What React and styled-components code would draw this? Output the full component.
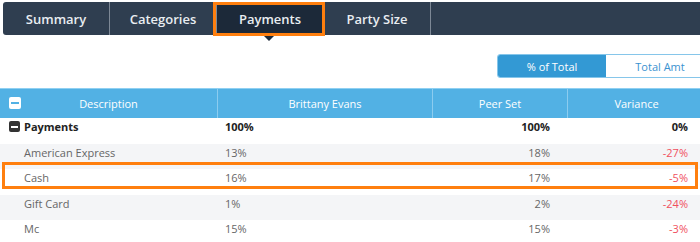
import React from "react";
import styled, { createGlobalStyle } from "styled-components";

const Global = createGlobalStyle`
  html, body { margin: 0; padding: 0; overflow: hidden; background: #fff; }
  body { font-family: "Open Sans", "Liberation Sans", sans-serif; }
`;

const Page = styled.div`
  position: relative;
  width: 715px;
  padding-top: 2px;
`;

const TabBar = styled.div`
  display: flex;
  height: 33px;
  margin-left: 3px;
  background: #2f3e50;
  border-radius: 3px;
`;

const Tab = styled.div`
  position: relative;
  width: 106px;
  display: flex;
  align-items: center;
  justify-content: center;
  font-size: 13px;
  font-weight: 600;
  color: #e9edf1;
  border-right: 1px solid #7d8896;
  background: ${(p) => (p.$active ? "#1c2939" : "transparent")};
  border-radius: ${(p) => (p.$first ? "3px 0 0 3px" : "0")};
  &::after {
    content: "";
    display: ${(p) => (p.$active ? "block" : "none")};
    position: absolute;
    left: 50%;
    top: 100%;
    margin-left: -7px;
    border-left: 6px solid transparent;
    border-right: 6px solid transparent;
    border-top: 6px solid #1c2939;
  }
`;

const Highlight = styled.div`
  position: absolute;
  border: 3px solid #ff7f0e;
  pointer-events: none;
  box-sizing: border-box;
`;

const Toolbar = styled.div`
  display: flex;
  justify-content: flex-end;
  margin-top: 19px;
`;

const Toggle = styled.div`
  display: flex;
  height: 24px;
  border: 1px solid #86c6ea;
  border-radius: 3px;
  overflow: hidden;
  box-sizing: border-box;
`;

const ToggleBtn = styled.div`
  width: 108px;
  display: flex;
  align-items: center;
  justify-content: center;
  font-size: 11px;
  color: ${(p) => (p.$active ? "#fff" : "#3b92d0")};
  background: ${(p) => (p.$active ? "#3399d4" : "#fff")};
`;

const Table = styled.div`
  margin-top: 10px;
  width: 705px;
  font-size: 11px;
`;

const cols = "217px 215px 135px 138px";

const HeadRow = styled.div`
  display: grid;
  grid-template-columns: ${cols};
  height: 30px;
  background: #52b1e4;
  border-top: 1px solid #8fd0f2;
  box-sizing: border-box;
`;

const HeadCell = styled.div`
  position: relative;
  display: flex;
  align-items: center;
  justify-content: center;
  color: #fff;
  border-left: ${(p) => (p.$first ? "none" : "1px solid #8cccef")};
`;

const HeadIcon = styled.span`
  position: absolute;
  left: 9px;
  top: 8px;
  width: 12px;
  height: 12px;
  border-radius: 2px;
  background: #fff;
  display: flex;
  align-items: center;
  justify-content: center;
  &::before {
    content: "";
    width: 8px;
    height: 2px;
    background: #52b1e4;
  }
`;

const Row = styled.div`
  display: grid;
  grid-template-columns: ${cols};
  height: 25.5px;
  background: ${(p) => (p.$alt ? "#f4f5f7" : "#fff")};
  color: ${(p) => (p.$bold ? "#222" : "#666")};
  font-weight: ${(p) => (p.$bold ? 700 : 400)};
  line-height: 15px;
`;

const Cell = styled.div`
  padding: 1px ${(p) => (p.$right ? "17px" : "0")} 0 ${(p) => p.$indent || "0"};
  text-align: ${(p) => (p.$right ? "right" : "left")};
  color: ${(p) => (p.$neg ? "#f0505e" : "inherit")};
  display: flex;
  align-items: flex-start;
  justify-content: ${(p) => (p.$right ? "flex-end" : "flex-start")};
`;

const GroupIcon = styled.span`
  width: 11px;
  height: 11px;
  border-radius: 2px;
  background: #333;
  margin: 2px 4px 0 0;
  display: flex;
  align-items: center;
  justify-content: center;
  &::before {
    content: "";
    width: 7px;
    height: 2px;
    background: #fff;
  }
`;

const rows = [
  { name: "American Express", a: "13%", b: "18%", v: "-27%" },
  { name: "Cash", a: "16%", b: "17%", v: "-5%" },
  { name: "Gift Card", a: "1%", b: "2%", v: "-24%" },
  { name: "Mc", a: "15%", b: "15%", v: "-3%" },
];

export default function App() {
  return (
    <Page>
      <Global />
      <TabBar>
        <Tab $first>Summary</Tab>
        <Tab>Categories</Tab>
        <Tab $active>Payments</Tab>
        <Tab>Party Size</Tab>
      </TabBar>
      <Highlight style={{ left: 213, top: 2, width: 112, height: 34 }} />
      <Toolbar>
        <Toggle>
          <ToggleBtn $active>% of Total</ToggleBtn>
          <ToggleBtn>Total Amt</ToggleBtn>
        </Toggle>
      </Toolbar>
      <Table>
        <HeadRow>
          <HeadCell $first>
            <HeadIcon />
            Description
          </HeadCell>
          <HeadCell>Brittany Evans</HeadCell>
          <HeadCell>Peer Set</HeadCell>
          <HeadCell>Variance</HeadCell>
        </HeadRow>
        <Row $bold>
          <Cell $indent="9px">
            <GroupIcon />
            Payments
          </Cell>
          <Cell $indent="8px">100%</Cell>
          <Cell $right>100%</Cell>
          <Cell $right>0%</Cell>
        </Row>
        {rows.map((r, i) => (
          <Row key={r.name} $alt={i % 2 === 0}>
            <Cell $indent="24px">{r.name}</Cell>
            <Cell $indent="8px">{r.a}</Cell>
            <Cell $right>{r.b}</Cell>
            <Cell $right $neg>{r.v}</Cell>
          </Row>
        ))}
      </Table>
      <Highlight style={{ left: 2, top: 162, width: 696, height: 27 }} />
    </Page>
  );
}
